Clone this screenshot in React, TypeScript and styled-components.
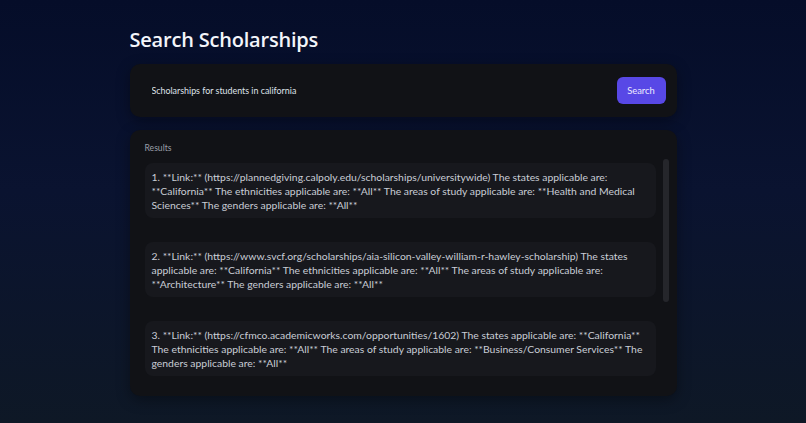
import styled, { createGlobalStyle } from "styled-components";

const GlobalStyle = createGlobalStyle`
  html, body {
    margin: 0;
    padding: 0;
  }
  body {
    min-height: 423px;
    background: linear-gradient(180deg, #050d29 0%, #0a1330 45%, #0e1826 100%);
    font-family: "Lato", "Open Sans", sans-serif;
    color: #e6e8ee;
  }
`;

const Page = styled.div`
  width: 547px;
  margin: 0 auto;
  padding-top: 26px;
`;

const Title = styled.h1`
  margin: 0 0 10px;
  font-family: "Open Sans", "Noto Sans", sans-serif;
  font-size: 20px;
  line-height: 28px;
  font-weight: 600;
  color: #f3f5fa;
  letter-spacing: -0.2px;
`;

const Card = styled.section`
  background-color: #111216;
  border-radius: 10px;
  box-shadow: 0 4px 14px rgba(0, 0, 0, 0.35);
`;

const SearchCard = styled(Card)`
  height: 53px;
  display: flex;
  align-items: center;
  gap: 10px;
  padding: 0 11px 0 22px;
  box-sizing: border-box;
  margin-bottom: 13px;
`;

const Input = styled.input`
  flex: 1;
  background: transparent;
  border: none;
  outline: none;
  padding: 0;
  font-family: inherit;
  font-size: 8.9px;
  color: #dfe2ea;
`;

const Button = styled.button`
  width: 49px;
  height: 27px;
  border: none;
  border-radius: 6px;
  background-color: #5848e6;
  color: #eceafe;
  font-family: inherit;
  font-size: 9.4px;
  cursor: pointer;
`;

const ResultsCard = styled(Card)`
  height: 266px;
  box-sizing: border-box;
  padding: 12px 8px 11px 15px;
  display: flex;
  flex-direction: column;
`;

const Label = styled.div`
  font-size: 8.6px;
  line-height: 12px;
  color: #9a9ea8;
  margin-bottom: 3px;
`;

const List = styled.div`
  flex: 1;
  min-height: 0;
  display: flex;
  gap: 7px;
  overflow: hidden;
`;

const Items = styled.div`
  flex: 1;
  padding-top: 6px;
`;

const ScrollTrack = styled.div`
  width: 6px;
  padding-top: 2px;
`;

const ScrollThumb = styled.div<{ $size: number }>`
  height: ${(p) => p.$size}px;
  border-radius: 3px;
  background-color: #25262b;
`;

const Item = styled.div`
  background-color: #17181d;
  border-radius: 8px;
  padding: 7px 4px 6px 7px;
  margin-bottom: 24px;
  font-size: 10.4px;
  line-height: 14px;
  color: #c9cdd6;
  white-space: pre;
`;

const results = [
  "1. **Link:** (https://plannedgiving.calpoly.edu/scholarships/universitywide) The states applicable are:\n**California** The ethnicities applicable are: **All** The areas of study applicable are: **Health and Medical\nSciences** The genders applicable are: **All**",
  "2. **Link:** (https://www.svcf.org/scholarships/aia-silicon-valley-william-r-hawley-scholarship) The states\napplicable are: **California** The ethnicities applicable are: **All** The areas of study applicable are:\n**Architecture** The genders applicable are: **All**",
  "3. **Link:** (https://cfmco.academicworks.com/opportunities/1602) The states applicable are: **California**\nThe ethnicities applicable are: **All** The areas of study applicable are: **Business/Consumer Services** The\ngenders applicable are: **All**",
];

function App() {
  return (
    <>
      <GlobalStyle />
      <Page>
        <Title>Search Scholarships</Title>
        <SearchCard>
          <Input defaultValue="Scholarships for students in california" />
          <Button>Search</Button>
        </SearchCard>
        <ResultsCard>
          <Label>Results</Label>
          <List>
            <Items>
              {results.map((text) => (
                <Item key={text}>{text}</Item>
              ))}
            </Items>
            <ScrollTrack>
              <ScrollThumb $size={143} />
            </ScrollTrack>
          </List>
        </ResultsCard>
      </Page>
    </>
  );
}

export default App;
